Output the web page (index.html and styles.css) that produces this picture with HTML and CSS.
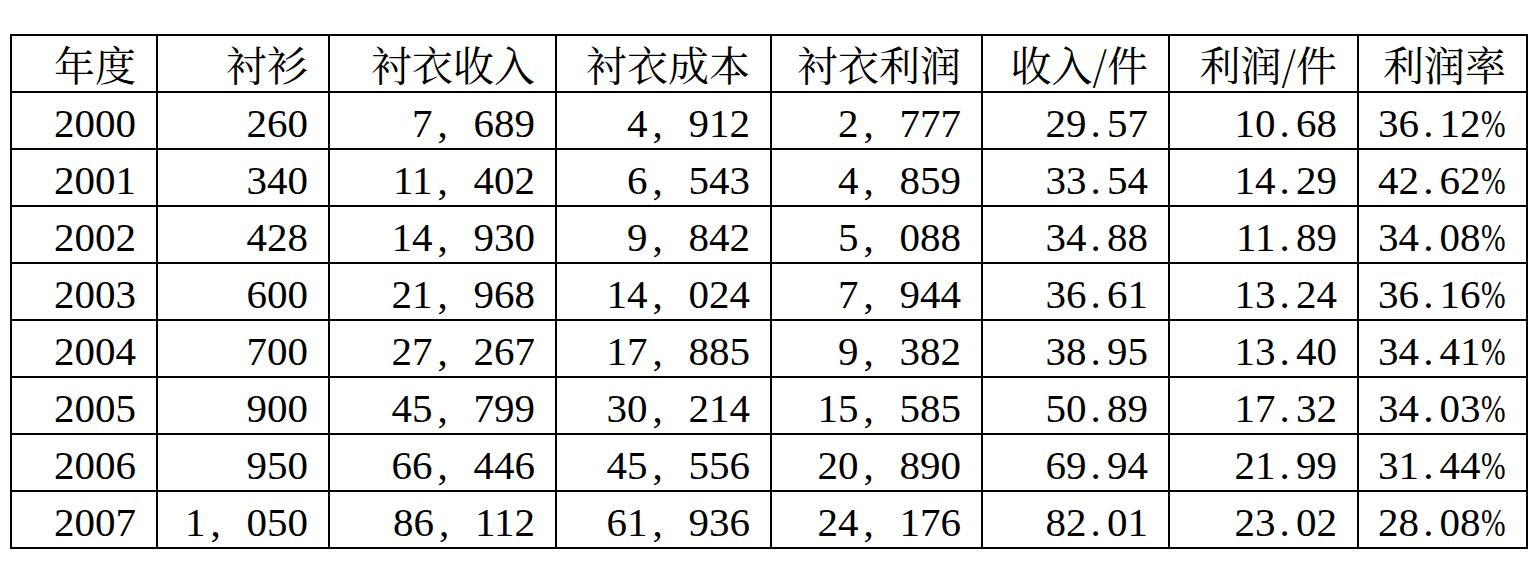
FILE: index.html
```html
<!DOCTYPE html>
<html lang="en">
<head>
<meta charset="utf-8">
<link rel="stylesheet" href="styles.css">
</head>
<body>
<table class="data">
  <colgroup>
    <col class="c1"><col class="c2"><col class="c3"><col class="c4"><col class="c5"><col class="c6"><col class="c7"><col class="c8">
  </colgroup>
  <thead lang="zh-CN">
    <tr><th>年度</th><th>衬衫</th><th>衬衣收入</th><th>衬衣成本</th><th>衬衣利润</th><th>收入/件</th><th>利润/件</th><th>利润率</th></tr>
  </thead>
  <tbody lang="en">
    <tr><td>2000</td><td>260</td><td>7<span class="sep">,</span>689</td><td>4<span class="sep">,</span>912</td><td>2<span class="sep">,</span>777</td><td>29<span class="dot">.</span>57</td><td>10<span class="dot">.</span>68</td><td>36<span class="dot">.</span>12<span class="pct">%</span></td></tr>
    <tr><td>2001</td><td>340</td><td>11<span class="sep">,</span>402</td><td>6<span class="sep">,</span>543</td><td>4<span class="sep">,</span>859</td><td>33<span class="dot">.</span>54</td><td>14<span class="dot">.</span>29</td><td>42<span class="dot">.</span>62<span class="pct">%</span></td></tr>
    <tr><td>2002</td><td>428</td><td>14<span class="sep">,</span>930</td><td>9<span class="sep">,</span>842</td><td>5<span class="sep">,</span>088</td><td>34<span class="dot">.</span>88</td><td>11<span class="dot">.</span>89</td><td>34<span class="dot">.</span>08<span class="pct">%</span></td></tr>
    <tr><td>2003</td><td>600</td><td>21<span class="sep">,</span>968</td><td>14<span class="sep">,</span>024</td><td>7<span class="sep">,</span>944</td><td>36<span class="dot">.</span>61</td><td>13<span class="dot">.</span>24</td><td>36<span class="dot">.</span>16<span class="pct">%</span></td></tr>
    <tr><td>2004</td><td>700</td><td>27<span class="sep">,</span>267</td><td>17<span class="sep">,</span>885</td><td>9<span class="sep">,</span>382</td><td>38<span class="dot">.</span>95</td><td>13<span class="dot">.</span>40</td><td>34<span class="dot">.</span>41<span class="pct">%</span></td></tr>
    <tr><td>2005</td><td>900</td><td>45<span class="sep">,</span>799</td><td>30<span class="sep">,</span>214</td><td>15<span class="sep">,</span>585</td><td>50<span class="dot">.</span>89</td><td>17<span class="dot">.</span>32</td><td>34<span class="dot">.</span>03<span class="pct">%</span></td></tr>
    <tr><td>2006</td><td>950</td><td>66<span class="sep">,</span>446</td><td>45<span class="sep">,</span>556</td><td>20<span class="sep">,</span>890</td><td>69<span class="dot">.</span>94</td><td>21<span class="dot">.</span>99</td><td>31<span class="dot">.</span>44<span class="pct">%</span></td></tr>
    <tr><td>2007</td><td>1<span class="sep">,</span>050</td><td>86<span class="sep">,</span>112</td><td>61<span class="sep">,</span>936</td><td>24<span class="sep">,</span>176</td><td>82<span class="dot">.</span>01</td><td>23<span class="dot">.</span>02</td><td>28<span class="dot">.</span>08<span class="pct">%</span></td></tr>
  </tbody>
</table>
</body>
</html>
```
FILE: styles.css
```css
html, body {
  margin: 0;
  background: #ffffff;
}
body {
  padding: 34px 0 0 10px;
  color: #000;
  font-family: "Liberation Serif", "Times New Roman";
}
.data {
  border-collapse: collapse;
  table-layout: fixed;
  width: 1516px;
}
.c1 { width: 146px; }
.c2 { width: 172px; }
.c3 { width: 227px; }
.c4 { width: 215px; }
.c5 { width: 211px; }
.c6 { width: 187px; }
.c7 { width: 189px; }
.c8 { width: 169px; }
.data th,
.data td {
  border: 2px solid #000;
  height: 57px;
  padding: 0 20px 0 0;
  box-sizing: border-box;
  text-align: right;
  vertical-align: middle;
  font-weight: normal;
  white-space: nowrap;
}
.data th {
  font-family: "Noto Serif CJK SC", "AR PL UMing CN", "Noto Sans CJK SC";
  font-size: 41px;
  line-height: 50px;
}
.data td {
  font-family: "Liberation Serif", "Times New Roman";
  font-size: 41px;
  line-height: 44px;
  padding-top: 5px;
}
.sep {
  display: inline-block;
  width: 1em;
  padding-left: 0.12em;
  box-sizing: border-box;
  text-align: left;
}
.dot {
  display: inline-block;
  width: 0.5em;
  padding-left: 0.1em;
  box-sizing: border-box;
  text-align: left;
}
.pct {
  display: inline-block;
  width: 0.62em;
  transform: scaleX(0.72);
  transform-origin: left center;
}
```
